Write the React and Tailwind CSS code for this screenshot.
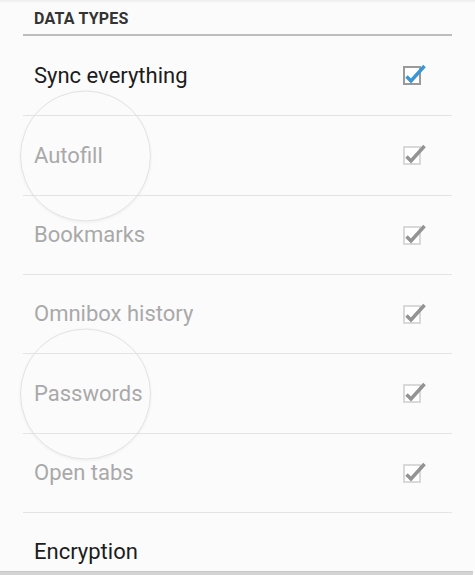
import { Fragment } from 'react'

const rows = [
  { label: 'Sync everything', active: true, h: 'h-[79px]' },
  { label: 'Autofill', active: false, h: 'h-[79px]', ring: true },
  { label: 'Bookmarks', active: false, h: 'h-[78px]' },
  { label: 'Omnibox history', active: false, h: 'h-[78px]' },
  { label: 'Passwords', active: false, h: 'h-[79px]', ring: true },
  { label: 'Open tabs', active: false, h: 'h-[78px]' },
]

function CheckBox({ active }) {
  return (
    <div className="relative h-[19px] w-[18px]">
      <div
        className={
          active
            ? 'absolute inset-0 border-2 border-[#9a9a9a] bg-white'
            : 'absolute inset-0 border-2 border-[#d9d9d9] bg-white'
        }
      />
      <svg className="absolute left-[-1px] top-[-5px] h-[26px] w-[26px] overflow-visible" viewBox="0 0 26 26">
        <path
          d="M4.5 15.5 L9 20 L22.5 5"
          fill="none"
          stroke={active ? '#3b97d3' : '#939393'}
          strokeWidth="3.5"
          strokeLinecap="butt"
          strokeLinejoin="miter"
        />
      </svg>
    </div>
  )
}

export default function App() {
  return (
    <div className="relative h-[575px] w-[475px] overflow-hidden bg-[#fbfbfb] font-['Roboto',sans-serif]">
      <div className="h-[3px] bg-gradient-to-b from-[#ececec] to-[#fbfbfb]" />
      <div className="px-[23px]">
        <div className="flex h-[33px] items-start border-b-2 border-[#bdbdbd] pl-[11px] pt-[7px]">
          <span className="text-[16px] font-bold leading-[18px] tracking-[0.2px] text-[#333333]">DATA TYPES</span>
        </div>

        {rows.map((row) => (
          <Fragment key={row.label}>
            <div className={`relative flex items-center justify-between pl-[11px] pr-[31px] ${row.h}`}>
              {row.ring && (
                <div className="absolute left-[-3px] top-1/2 h-[131px] w-[131px] -translate-y-1/2 rounded-full border border-[#e2e2e2] shadow-[0_1px_3px_rgba(0,0,0,0.06)]" />
              )}
              <span
                className={
                  row.active
                    ? 'relative text-[22px] leading-[26px] text-[#1c1c1c]'
                    : 'relative text-[22px] leading-[26px] text-[#a9a9a9]'
                }
              >
                {row.label}
              </span>
              <CheckBox active={row.active} />
            </div>
            <div className="h-px bg-[#e4e4e4]" />
          </Fragment>
        ))}

        <div className="flex h-[58px] items-center pl-[11px] pt-[20px]">
          <span className="text-[22px] leading-[26px] text-[#1c1c1c]">Encryption</span>
        </div>
      </div>
      <div className="absolute bottom-0 left-0 h-[4px] w-[473px] border-t border-[#c8c8c8] bg-[#d4d4d4]" />
    </div>
  )
}
